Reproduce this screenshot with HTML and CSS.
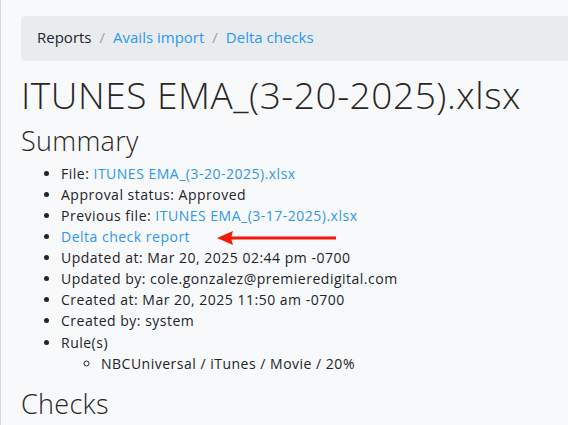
FILE: index.html
```html
<!DOCTYPE html>
<html lang="en">
<head>
    <meta charset="UTF-8">
    <title>Delta check - ITUNES EMA_(3-20-2025).xlsx</title>
    <link rel="stylesheet" href="styles.css">
</head>
<body>
    <div class="page">
        <nav class="breadcrumb">
            <span class="crumb">Reports</span>
            <span class="sep">/</span>
            <a class="crumb" href="#">Avails import</a>
            <span class="sep">/</span>
            <a class="crumb" href="#">Delta checks</a>
        </nav>

        <h1>ITUNES EMA_(3-20-2025).xlsx</h1>

        <h2>Summary</h2>
        <ul class="summary">
            <li>File: <a href="#">ITUNES EMA_(3-20-2025).xlsx</a></li>
            <li>Approval status: Approved</li>
            <li>Previous file: <a href="#">ITUNES EMA_(3-17-2025).xlsx</a></li>
            <li><a href="#">Delta check report</a><svg class="arrow" width="120" height="16" viewBox="0 0 120 16">
                    <line x1="12" y1="8" x2="119" y2="8" stroke="#f5190a" stroke-width="3"/>
                    <polygon points="0,8 16,1 14,8 16,15" fill="#f5190a"/>
                </svg></li>
            <li>Updated at: Mar 20, 2025 02:44 pm -0700</li>
            <li>Updated by: cole.gonzalez@premieredigital.com</li>
            <li>Created at: Mar 20, 2025 11:50 am -0700</li>
            <li>Created by: system</li>
            <li>Rule(s)
                <ul>
                    <li>NBCUniversal / iTunes / Movie / 20%</li>
                </ul>
            </li>
        </ul>

        <h2 class="checks">Checks</h2>
    </div>
</body>
</html>
```

FILE: styles.css
```css
body, html {
    margin: 0;
    padding: 0;
    height: 100%;
    overflow: hidden;
    background-color: #f8f9fa;
}
body {
    font-family: "Open Sans", "Liberation Sans", sans-serif;
    color: #212529;
    border-left: 1px solid #d6d8db;
}
a {
    color: #2c98f0;
    text-decoration: none;
}
.page {
    padding: 16px 0 0 20px;
}
.breadcrumb {
    display: flex;
    align-items: center;
    gap: 8px;
    height: 42px;
    padding: 0 16px 3px;
    background-color: #e9ecef;
    border-radius: 4px;
    font-size: 15px;
    margin-right: -20px;
}
.breadcrumb .sep {
    color: #9aa0a6;
}
h1 {
    margin: 12px 0 0;
    font-size: 37px;
    font-weight: 300;
    line-height: 1.2;
    letter-spacing: 0.55px;
    color: #2a2626;
}
h2 {
    margin: 8px 0 0;
    font-size: 27px;
    font-weight: 300;
    line-height: 1.2;
    letter-spacing: 0.3px;
    color: #2a2626;
}
h2.checks {
    margin-top: 5px;
}
.summary {
    margin: 5px 0 14px;
    padding-left: 40px;
    font-size: 14px;
    line-height: 21.1px;
    letter-spacing: 0.5px;
}
.summary ul {
    margin: 0;
    padding-left: 40px;
    list-style: circle;
}
.arrow {
    vertical-align: middle;
    margin-left: 27px;
}
```
